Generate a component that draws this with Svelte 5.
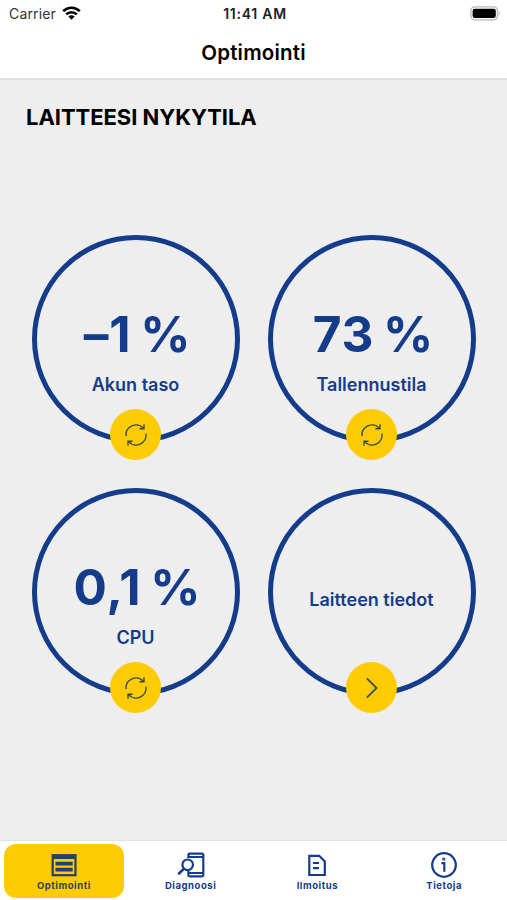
<script lang="ts">
	type Gauge = { id: string; value?: string; label: string; action: 'refresh' | 'open' };

	const gauges: Gauge[] = [
		{ id: 'battery', value: '–1 %', label: 'Akun taso', action: 'refresh' },
		{ id: 'storage', value: '73 %', label: 'Tallennustila', action: 'refresh' },
		{ id: 'cpu', value: '0,1 %', label: 'CPU', action: 'refresh' },
		{ id: 'device', label: 'Laitteen tiedot', action: 'open' }
	];

	const tabs = [
		{ id: 'optimize', label: 'Optimointi' },
		{ id: 'diagnose', label: 'Diagnoosi' },
		{ id: 'report', label: 'Ilmoitus' },
		{ id: 'info', label: 'Tietoja' }
	];

	let activeTab = $state('optimize');
</script>

<div class="screen">
	<header class="top">
		<div class="status-bar">
			<div class="carrier">
				<span>Carrier</span>
				<svg width="19" height="14" viewBox="0 0 19 14">
					<g fill="none" stroke="#000" stroke-width="2.6">
						<path d="M1.2 5.2A11.8 11.8 0 0 1 17.8 5.2" />
						<path d="M4.2 8.4A7.6 7.6 0 0 1 14.8 8.4" />
					</g>
					<path d="M6.4 10.5A4.4 4.4 0 0 1 12.6 10.5L9.5 13.7Z" fill="#000" />
				</svg>
			</div>
			<span class="time">11:41 AM</span>
			<div class="power">
				<svg width="31" height="15" viewBox="0 0 31 15">
					<rect x="0.9" y="0.9" width="26.6" height="13" rx="4" fill="#fff" stroke="#b9b9b9" stroke-width="1.4" />
					<rect x="2.6" y="2.8" width="23.2" height="9.2" rx="2.2" fill="#000" />
					<path d="M28.8 5.2A3 3 0 0 1 28.8 9.8Z" fill="#b9b9b9" />
				</svg>
			</div>
		</div>
		<h1>Optimointi</h1>
	</header>

	<main>
		<h2>LAITTEESI NYKYTILA</h2>
		<div class="gauges">
			{#each gauges as gauge (gauge.id)}
				<section class="gauge" class:no-value={!gauge.value}>
					{#if gauge.value}
						<span class="value">{gauge.value}</span>
					{/if}
					<span class="label">{gauge.label}</span>
					<button class="action" aria-label={gauge.label}>
						{#if gauge.action === 'refresh'}
							<svg width="24" height="24" viewBox="0 0 24 24">
								<path d="M2.1 13.2A10 10 0 0 1 19.4 5.3M21.9 10.7A10 10 0 0 1 4.6 18.8" />
								<path d="M20 1.2V5.8H15.4M4 22.8V18.2H8.6" />
							</svg>
						{:else}
							<svg width="24" height="24" viewBox="0 0 24 24">
								<path d="M6.8 2.3L16.6 12L6.8 21.7" class="chevron" />
							</svg>
						{/if}
					</button>
				</section>
			{/each}
		</div>
	</main>

	<nav>
		{#each tabs as tab (tab.id)}
			<button class="tab" class:active={activeTab === tab.id} onclick={() => (activeTab = tab.id)}>
				<svg width="30" height="28" viewBox="0 0 30 28">
					{#if tab.id === 'optimize'}
						<rect x="3.7" y="4.2" width="22.8" height="20" />
						<path d="M3 6H27" stroke-width="4" />
						<path d="M6.5 12.7H23.7M6.5 18.7H23.7" stroke-width="3.8" />
					{:else if tab.id === 'diagnose'}
						<path d="M12.4 7V4Q12.4 2.7 13.7 2.7H26Q27.3 2.7 27.3 4V24Q27.3 25.3 26 25.3H13.7Q12.4 25.3 12.4 24V19.5" />
						<path d="M12.4 6H27.3M12.4 22H27.3" />
						<circle cx="11.7" cy="13.8" r="5.3" />
						<path d="M8 17.6L2.3 23.2" stroke-width="2.6" />
					{:else if tab.id === 'report'}
						<path d="M7.3 4.8H17.2L22.8 10.4V24H7.3Z" />
						<path d="M11 12H17M11 17.2H17" />
					{:else}
						<circle cx="15" cy="14" r="11.8" />
						<path d="M12.4 12.2H15.3V20.7" />
						<circle cx="14.8" cy="8.1" r="0.6" />
					{/if}
				</svg>
				<span>{tab.label}</span>
			</button>
		{/each}
	</nav>
</div>

<style>
	:global(body) {
		background: #eee;
	}

	.screen {
		height: 100vh;
		display: flex;
		flex-direction: column;
		background: #eee;
		font-family: Inter, 'Liberation Sans', sans-serif;
		color: #000;
	}

	.top {
		height: 78px;
		background: #fff;
		border-bottom: 2px solid #dfdfdf;
		flex-shrink: 0;
	}

	.status-bar {
		display: grid;
		grid-template-columns: 1fr auto 1fr;
		align-items: center;
		height: 27px;
		padding: 0 6px 0 9px;
		font-size: 14px;
	}

	.carrier {
		display: flex;
		align-items: center;
		gap: 6px;
		color: #333;
		letter-spacing: 0.15px;
	}

	.carrier svg {
		position: relative;
		top: -1px;
	}

	.time {
		font-weight: 600;
		font-size: 14px;
		letter-spacing: 0.75px;
		color: #222;
	}

	.power {
		display: flex;
		justify-content: flex-end;
	}

	h1 {
		margin: 0;
		text-align: center;
		font-size: 20.5px;
		line-height: 51px;
		font-weight: 600;
		letter-spacing: 0.2px;
	}

	main {
		flex: 1;
	}

	h2 {
		margin: 0;
		padding: 22px 26px 0;
		font-size: 22px;
		line-height: 30px;
		font-weight: 700;
		letter-spacing: -0.05px;
	}

	.gauges {
		display: grid;
		grid-template-columns: 208px 208px;
		justify-content: center;
		gap: 45px 28px;
		margin-top: 103px;
	}

	.gauge {
		position: relative;
		box-sizing: border-box;
		height: 208px;
		border: 5px solid #143c8a;
		border-radius: 50%;
		display: flex;
		flex-direction: column;
		align-items: center;
		color: #143c8a;
		padding-top: 64px;
	}

	.value {
		padding-left: 4px;
		font-size: 49.5px;
		line-height: 60px;
		font-weight: 700;
		letter-spacing: 0.9px;
		word-spacing: -4px;
		white-space: nowrap;
	}

	.label {
		margin-top: 9px;
		font-size: 18px;
		line-height: 24px;
		font-weight: 600;
		white-space: nowrap;
	}

	.no-value {
		padding-top: 86px;
	}

	.action {
		position: absolute;
		left: 50%;
		bottom: -22px;
		width: 51px;
		height: 51px;
		margin-left: -25.5px;
		padding: 0;
		border: none;
		border-radius: 50%;
		background: #ffcb05;
		display: flex;
		align-items: center;
		justify-content: center;
	}

	.action svg {
		fill: none;
		stroke: #35503f;
		stroke-width: 1.4;
	}

	.action .chevron {
		stroke-width: 1.8;
	}

	nav {
		display: grid;
		grid-template-columns: repeat(4, 1fr);
		height: 59px;
		background: #fff;
		border-top: 1px solid #e2e2e2;
		flex-shrink: 0;
	}

	.tab {
		margin: 3px 2.5px 2px 3.5px;
		padding: 7px 0 0;
		border: none;
		border-radius: 12px;
		background: none;
		display: flex;
		flex-direction: column;
		align-items: center;
		font-family: inherit;
		font-size: 9.5px;
		line-height: 13px;
		font-weight: 700;
		letter-spacing: 0.55px;
		color: #143c8a;
	}

	.tab svg {
		fill: none;
		stroke: #143c8a;
		stroke-width: 2.2;
	}

	.tab.active {
		background: #ffcb05;
		color: #2d4650;
	}

	.tab.active svg {
		stroke: #233f6b;
	}
</style>
